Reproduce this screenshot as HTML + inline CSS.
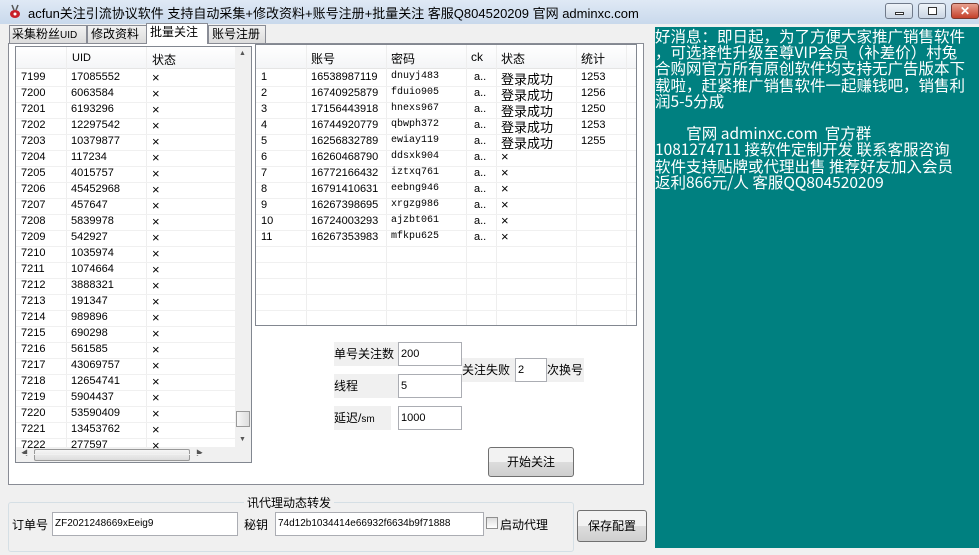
<!DOCTYPE html>
<html><head><meta charset="utf-8"><style>
*{margin:0;padding:0;box-sizing:border-box}
body{width:979px;height:555px;overflow:hidden;background:#f0f0f0;font-family:"Liberation Sans","Noto Sans CJK SC",sans-serif;font-size:12px;color:#000;position:relative}
.a{position:absolute;white-space:nowrap}
.title{left:0;top:0;width:979px;height:24px;background:linear-gradient(#dfe9f5,#c9d9ec);}
.tab{position:absolute;top:25px;height:18px;border:1px solid #898c95;border-bottom:none;background:linear-gradient(#f2f2f2,#dcdcdc);font-size:12px;line-height:16px;padding:0 3px;white-space:nowrap;overflow:visible}
.cell{position:absolute;white-space:nowrap;font-size:11px}
.inp{position:absolute;background:#fff;border:1px solid #abadb3;font-size:11px;padding:3px 2px;height:24px;line-height:16px}
.btn{position:absolute;border:1px solid #707070;border-radius:3px;background:linear-gradient(#f2f2f2 50%,#dddddd 50%,#cfcfcf);text-align:center;font-size:12px}
.teal{left:655px;top:27px;width:324px;height:521px;background:#008080;color:#fff;font-family:"Noto Sans CJK SC","WenQuanYi Zen Hei",sans-serif;font-size:15.5px;line-height:16.2px;padding:1px 0 0 0;white-space:pre;overflow:hidden}
</style></head><body>
<div class="a title"></div>
<div class="a" style="left:8px;top:4px;width:14px;height:14px;"><svg width="14" height="14"><ellipse cx="7" cy="10" rx="5" ry="4" fill="#c8202a"/><line x1="4" y1="1" x2="6" y2="6" stroke="#555" stroke-width="1.5"/><line x1="10" y1="1" x2="8" y2="6" stroke="#555" stroke-width="1.5"/><circle cx="7" cy="10" r="1.5" fill="#fff"/></svg></div>
<div class="a" style="left:28px;top:3px;font-size:13px;white-space:nowrap">acfun关注引流协议软件 支持自动采集+修改资料+账号注册+批量关注 客服Q804520209 官网 adminxc.com</div>
<div class="a" style="left:885px;top:3px;width:28px;height:16px;border:1px solid #707a8a;border-radius:3px;background:linear-gradient(#eef3f9,#cbd6e4)"><div class="a" style="left:9px;top:8px;width:9px;height:3px;border:1px solid #333;background:#fff"></div></div>
<div class="a" style="left:918px;top:3px;width:28px;height:16px;border:1px solid #707a8a;border-radius:3px;background:linear-gradient(#eef3f9,#cbd6e4)"><div class="a" style="left:9px;top:3px;width:9px;height:8px;border:1px solid #333;background:#fff"></div></div>
<div class="a" style="left:951px;top:3px;width:28px;height:16px;border:1px solid #7a3a30;border-radius:3px;background:linear-gradient(#e8a090,#c4402a);color:#fff;font-weight:bold;text-align:center;line-height:14px;font-size:12px">✕</div>

<div class="tab" style="left:9px;width:78px;padding:0 2px">采集粉丝<span style="font-size:10px">UID</span></div>
<div class="tab" style="left:87px;width:60px">修改资料</div>
<div class="tab" style="left:146px;top:23px;height:21px;width:62px;background:#fff;z-index:2">批量关注</div>
<div class="tab" style="left:208px;width:58px">账号注册</div>
<div class="a" style="left:8px;top:43px;width:636px;height:442px;background:#fff;border:1px solid #898c95"></div>

<!-- left list -->
<div class="a" style="left:15px;top:46px;width:237px;height:417px;border:1px solid #828790;background:#fff;overflow:hidden">
<div class="a" style="left:0;top:0;width:219px;height:22px;background:linear-gradient(#fff,#f4f5f7);border-bottom:1px solid #e5e5e5"></div>
<div class="cell" style="left:56px;top:5px">UID</div><div class="cell" style="left:136px;top:4px;font-size:12px">状态</div>
<div class="a" style="left:50px;top:0;width:1px;height:400px;background:#eee"></div>
<div class="a" style="left:130px;top:0;width:1px;height:400px;background:#eee"></div>
<div class="a" style="left:219px;top:0;width:16px;height:400px;background:#f0f0f0"></div>
<div class="a" style="left:220px;top:364px;width:14px;height:16px;border:1px solid #999;background:linear-gradient(90deg,#f6f6f6,#ddd)"></div>
<div class="a" style="left:223px;top:3px;font-size:7px;color:#555">▲</div>
<div class="a" style="left:223px;top:389px;font-size:7px;color:#555">▼</div>
<div class="a" style="left:0;top:400px;width:235px;height:16px;background:#f0f0f0"></div>
<div class="a" style="left:18px;top:402px;width:156px;height:12px;border:1px solid #999;border-radius:2px;background:linear-gradient(#f6f6f6,#ddd)"></div>
<div class="a" style="left:5px;top:401px;font-size:7px;color:#555">◀</div>
<div class="a" style="left:180px;top:401px;font-size:7px;color:#555">▶</div>
<div id="rowsL"></div>
</div>

<!-- right grid -->
<div class="a" style="left:255px;top:44px;width:382px;height:282px;border:1px solid #828790;background:#fff;overflow:hidden" id="grid">
<div class="a" style="left:0;top:0;width:380px;height:24px;background:linear-gradient(#fff,#f4f5f7);border-bottom:1px solid #e5e5e5"></div>
</div>

<div class="a" style="left:334px;top:342px;width:64px;height:24px;background:#f0f0f0;line-height:24px">单号关注数</div>
<div class="inp" style="left:398px;top:342px;width:64px">200</div>
<div class="a" style="left:334px;top:374px;width:64px;height:24px;background:#f0f0f0;line-height:24px">线程</div>
<div class="inp" style="left:398px;top:374px;width:64px">5</div>
<div class="a" style="left:334px;top:406px;width:57px;height:24px;background:#f0f0f0;line-height:24px">延迟/<span style="font-size:10px">sm</span></div>
<div class="inp" style="left:398px;top:406px;width:64px">1000</div>
<div class="a" style="left:462px;top:358px;width:122px;height:24px;background:#f0f0f0"></div>
<div class="a" style="left:462px;top:358px;line-height:24px">关注失败</div>
<div class="a" style="left:547px;top:358px;line-height:24px">次换号</div>
<div class="inp" style="left:515px;top:358px;width:32px">2</div>
<div class="btn" style="left:488px;top:447px;width:86px;height:30px;line-height:28px">开始关注</div>

<!-- group -->
<div class="a" style="left:8px;top:502px;width:566px;height:50px;border:1px solid #d5dfe5;border-radius:3px"></div>
<div class="a" style="left:244px;top:494px;background:#f0f0f0;padding:0 3px">讯代理动态转发</div>
<div class="a" style="left:12px;top:516px">订单号</div>
<div class="inp" style="left:52px;top:512px;width:186px;font-size:10px">ZF2021248669xEeig9</div>
<div class="a" style="left:244px;top:516px">秘钥</div>
<div class="inp" style="left:275px;top:512px;width:209px;font-size:10px">74d12b1034414e66932f6634b9f71888</div>
<div class="a" style="left:486px;top:517px;width:12px;height:12px;border:1px solid #8f8f8f;background:linear-gradient(#ddd,#fff)"></div>
<div class="a" style="left:500px;top:516px">启动代理</div>
<div class="btn" style="left:577px;top:510px;width:70px;height:32px;line-height:30px">保存配置</div>

<div class="a teal">好消息：即日起，为了方便大家推广销售软件
，可选择性升级至尊VIP会员（补差价）村兔
合购网官方所有原创软件均支持无广告版本下
载啦，赶紧推广销售软件一起赚钱吧，销售利
润5-5分成

         官网 adminxc.com  官方群
1081274711 接软件定制开发 联系客服咨询
软件支持贴牌或代理出售 推荐好友加入会员
返利866元/人 客服QQ804520209</div>

<script>
var L=[["7199","17085552"],["7200","6063584"],["7201","6193296"],["7202","12297542"],["7203","10379877"],["7204","117234"],["7205","4015757"],["7206","45452968"],["7207","457647"],["7208","5839978"],["7209","542927"],["7210","1035974"],["7211","1074664"],["7212","3888321"],["7213","191347"],["7214","989896"],["7215","690298"],["7216","561585"],["7217","43069757"],["7218","12654741"],["7219","5904437"],["7220","53590409"],["7221","13453762"],["7222","277597"]];
var h="";L.forEach(function(r,i){var y=24+i*16;h+='<div class="cell" style="left:5px;top:'+y+'px">'+r[0]+'</div><div class="cell" style="left:55px;top:'+y+'px">'+r[1]+'</div><div class="cell" style="left:136px;top:'+(y-1)+'px;font-size:13px">×</div><div class="a" style="left:0;top:'+(y+15)+'px;width:219px;height:1px;background:#f0f0f0"></div>';});
document.getElementById("rowsL").innerHTML=h;
var G=[["16538987119","dnuyj483","登录成功","1253"],["16740925879","fduio905","登录成功","1256"],["17156443918","hnexs967","登录成功","1250"],["16744920779","qbwph372","登录成功","1253"],["16256832789","ewiay119","登录成功","1255"],["16260468790","ddsxk904","×",""],["16772166432","iztxq761","×",""],["16791410631","eebng946","×",""],["16267398695","xrgzg986","×",""],["16724003293","ajzbt061","×",""],["16267353983","mfkpu625","×",""]];
var xs=[0,50,130,210,240,320,370];
var g='';[["",5],["账号",55],["密码",135],["ck",215],["状态",245],["统计",325]].forEach(function(c){g+='<div class="cell" style="left:'+c[1]+'px;top:5px;font-size:12px">'+c[0]+'</div>'});
xs.slice(1).forEach(function(x){g+='<div class="a" style="left:'+x+'px;top:0;width:1px;height:282px;background:#eee"></div>'});
for(var i=0;i<16;i++){var y=26+i*16;g+='<div class="a" style="left:0;top:'+(y+15)+'px;width:380px;height:1px;background:#f0f0f0"></div>';if(i<G.length){var r=G[i];g+='<div class="cell" style="left:5px;top:'+y+'px">'+(i+1)+'</div><div class="cell" style="left:55px;top:'+y+'px">'+r[0]+'</div><div class="cell" style="left:135px;top:'+y+'px;font-family:Liberation Mono,monospace;font-size:10px">'+r[1]+'</div><div class="cell" style="left:218px;top:'+y+'px">a..</div><div class="cell" style="left:245px;top:'+(y-2)+'px;font-size:13px">'+r[2]+'</div><div class="cell" style="left:325px;top:'+y+'px">'+r[3]+'</div>';}}
document.getElementById("grid").insertAdjacentHTML("beforeend",g);
</script>
</body></html>
